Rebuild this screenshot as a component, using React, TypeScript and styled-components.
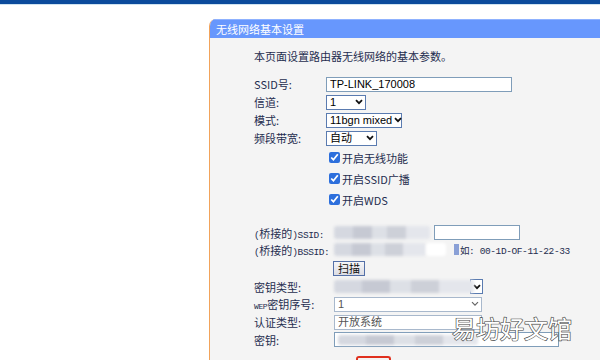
import React from "react";
import styled, { createGlobalStyle } from "styled-components";

const GlobalStyle = createGlobalStyle`
  html, body {
    margin: 0;
    padding: 0;
    background: #ffffff;
    overflow: hidden;
  }
  body {
    font-family: "Noto Sans CJK SC", "Liberation Sans", sans-serif;
  }
`;

const cjk = `"Noto Sans CJK SC", "Liberation Sans", sans-serif`;
const mono = `"Liberation Mono", "Noto Sans CJK SC", monospace`;

const Page = styled.div`
  position: relative;
  width: 600px;
  height: 360px;
  overflow: hidden;
`;

const TopBar = styled.div`
  height: 4px;
  background: #0b4b9c;
  border-bottom: 1px solid #cfe3f0;
`;

const Content = styled.div`
  padding: 14px 0 0 209px;
`;

const Panel = styled.div`
  border-left: 1px solid #f2a35a;
  border-top-left-radius: 7px;
  overflow: hidden;
  background: #f4f4f4;
  height: 400px;
`;

const PanelHeader = styled.div`
  height: 19px;
  background: #6797fd;
  border-top: 1px solid #8fb2ff;
  box-sizing: border-box;
  color: #ffffff;
  font-family: ${cjk};
  font-size: 11px;
  line-height: 18px;
  padding-left: 6px;
`;

const PanelBody = styled.div`
  padding: 11px 0 0 44px;
  color: #1f2d4f;
  font-size: 11px;
  font-family: ${cjk};
`;

const Intro = styled.div`
  height: 14px;
  line-height: 14px;
  margin-bottom: 12px;
`;

const Row = styled.div<{ $h?: number }>`
  display: flex;
  align-items: center;
  height: ${(p) => p.$h ?? 18}px;
`;

const Label = styled.div<{ $w?: number }>`
  width: ${(p) => p.$w ?? 72}px;
  flex: none;
  font-family: ${cjk};
  font-size: 11px;
  white-space: nowrap;
`;

/* Latin part of the bitmap-looking labels, narrower than the CJK glyphs */
const Latin = styled.span<{ $size?: number }>`
  font-family: ${mono};
  font-size: ${(p) => p.$size ?? 9.5}px;
  letter-spacing: -0.4px;
`;

const TextBox = styled.div<{ $w: number }>`
  width: ${(p) => p.$w}px;
  height: 15px;
  box-sizing: border-box;
  border: 1px solid #7f9db9;
  background: #ffffff;
  font-family: "Liberation Sans", sans-serif;
  font-size: 11px;
  line-height: 13px;
  padding-left: 3px;
  color: #000;
  white-space: nowrap;
`;

const Select = styled.div<{ $w: number; $faint?: boolean }>`
  width: ${(p) => p.$w}px;
  height: 15px;
  box-sizing: border-box;
  border: 1px solid ${(p) => (p.$faint ? "#a8b8cc" : "#5a7bb0")};
  background: #ffffff;
  display: flex;
  align-items: center;
  justify-content: space-between;
  gap: 2px;
  padding: 0 2px 0 3px;
  font-family: "Liberation Sans", ${cjk};
  font-size: 11px;
  line-height: 13px;
  white-space: nowrap;
  color: ${(p) => (p.$faint ? "#555" : "#000")};
`;

const Chevron = ({ faint }: { faint?: boolean }) => (
  <svg width="8" height="6" viewBox="0 0 8 6" style={{ flex: "none" }}>
    <path
      d="M1 1.2 L4 4.2 L7 1.2"
      fill="none"
      stroke={faint ? "#666" : "#111"}
      strokeWidth={faint ? 1.2 : 1.8}
    />
  </svg>
);

const CheckRow = styled(Row)`
  padding-left: 75px;
  gap: 2px;
`;

const Check = styled.input.attrs({ type: "checkbox", defaultChecked: true })`
  width: 11px;
  height: 11px;
  margin: 0;
  accent-color: #2d6fdc;
`;

const Blur = styled.div<{ $w: number; $h?: number; $c?: string }>`
  width: ${(p) => p.$w}px;
  height: ${(p) => p.$h ?? 13}px;
  background: ${(p) =>
    p.$c ??
    "linear-gradient(90deg,#d5d8e0 0 20%,#c6c9d3 20% 40%,#dde0e6 40% 55%,#cdd0d8 55% 75%,#e4e6ec 75%)"};
  filter: blur(1.5px);
  border-radius: 3px;
  flex: none;
`;

const FieldGroup = styled.div`
  display: flex;
  align-items: center;
  padding-left: 8px;
`;

const Hint = styled.span`
  font-family: ${mono};
  font-size: 9.5px;
  letter-spacing: -0.4px;
  color: #1f2d4f;
  display: flex;
  align-items: center;
  white-space: nowrap;
`;

const HintMark = styled.span`
  width: 5px;
  height: 11px;
  background: #8aa0d6;
  margin-right: 1px;
`;

const ScanButton = styled.div`
  margin-left: 79px;
  width: 32px;
  height: 15px;
  box-sizing: border-box;
  border: 1px solid #5470a8;
  background: linear-gradient(#f6f6f8, #dcdde4);
  font-size: 11px;
  line-height: 13px;
  text-align: center;
  color: #111;
`;

const ArrowBox = styled.div`
  width: 11px;
  height: 13px;
  border: 1px solid #5a7bb0;
  background: #fff;
  display: flex;
  align-items: center;
  justify-content: center;
  margin-left: -4px;
  flex: none;
`;

const RedMark = styled.div`
  margin: 8px 0 0 102px;
  width: 31px;
  height: 12px;
  border: 2px solid #e0301e;
  border-bottom: none;
  border-radius: 3px 3px 0 0;
`;

const Watermark = styled.div`
  position: absolute;
  left: 452px;
  top: 310px;
  font-family: ${cjk};
  font-size: 24px;
  color: #ffffff;
  -webkit-text-stroke: 1.2px #4a4a4a;
  paint-order: stroke fill;
  text-shadow: 0 0 1px #555;
`;

export default function App() {
  return (
    <Page>
      <GlobalStyle />
      <TopBar />
      <Content>
        <Panel>
          <PanelHeader>无线网络基本设置</PanelHeader>
          <PanelBody>
            <Intro>本页面设置路由器无线网络的基本参数。</Intro>
            <Row>
              <Label>SSID号:</Label>
              <TextBox $w={186}>TP-LINK_170008</TextBox>
            </Row>
            <Row>
              <Label>信道:</Label>
              <Select $w={40}>
                1 <Chevron />
              </Select>
            </Row>
            <Row>
              <Label>模式:</Label>
              <Select $w={76}>
                11bgn mixed <Chevron />
              </Select>
            </Row>
            <Row>
              <Label>频段带宽:</Label>
              <Select $w={51}>
                自动 <Chevron />
              </Select>
            </Row>
            <CheckRow $h={21}>
              <Check />
              开启无线功能
            </CheckRow>
            <CheckRow $h={21}>
              <Check />
              开启SSID广播
            </CheckRow>
            <CheckRow $h={21}>
              <Check />
              开启WDS
            </CheckRow>
            <Row $h={14} />
            <Row $h={17}>
              <Label>
                <Latin>(</Latin>桥接的<Latin>)SSID:</Latin>
              </Label>
              <FieldGroup>
                <Blur $w={96} />
                <TextBox $w={86} style={{ marginLeft: 4 }} />
              </FieldGroup>
            </Row>
            <Row $h={17}>
              <Label>
                <Latin>(</Latin>桥接的<Latin>)BSSID:</Latin>
              </Label>
              <FieldGroup>
                <Blur $w={92} />
                <Blur $w={20} $c="#ffffff" />
                <Blur $w={8} $c="transparent" />
                <Hint>
                  <HintMark />
                  如: 00-1D-OF-11-22-33
                </Hint>
              </FieldGroup>
            </Row>
            <Row $h={20}>
              <ScanButton>扫描</ScanButton>
            </Row>
            <Row $h={17}>
              <Label>密钥类型:</Label>
              <FieldGroup>
                <Blur $w={140} />
                <ArrowBox>
                  <Chevron />
                </ArrowBox>
              </FieldGroup>
            </Row>
            <Row $h={18}>
              <Label>
                <Latin $size={8}>WEP</Latin>密钥序号:
              </Label>
              <FieldGroup>
                <Select $w={148} $faint>
                  1 <Chevron faint />
                </Select>
              </FieldGroup>
            </Row>
            <Row $h={18}>
              <Label>认证类型:</Label>
              <FieldGroup>
                <Select $w={148} $faint>
                  开放系统 <span />
                </Select>
              </FieldGroup>
            </Row>
            <Row $h={17}>
              <Label>密钥:</Label>
              <FieldGroup>
                <TextBox $w={225} style={{ display: "flex", alignItems: "center" }}>
                  <Blur $w={140} $h={10} />
                </TextBox>
              </FieldGroup>
            </Row>
            <RedMark />
          </PanelBody>
        </Panel>
      </Content>
      <Watermark>易坊好文馆</Watermark>
    </Page>
  );
}
